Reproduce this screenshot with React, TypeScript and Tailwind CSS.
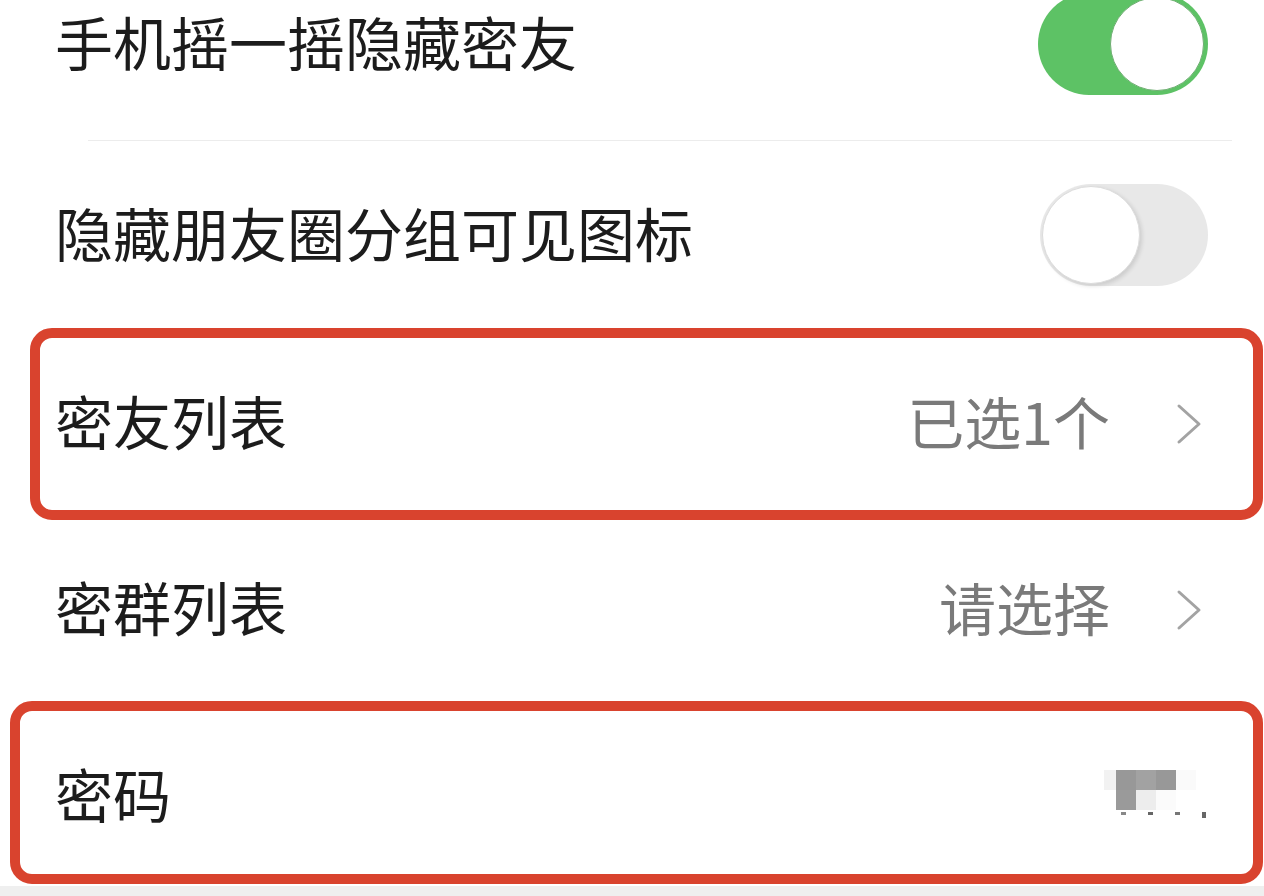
import React from "react";

const font = { fontFamily: '"Noto Sans CJK SC", "Noto Sans", sans-serif' };

function Toggle({ on }: { on: boolean }) {
  if (on) {
    return (
      <div className="flex h-[102px] w-[170px] shrink-0 items-center justify-end rounded-full bg-[#5dc265] pr-[4px]">
        <div className="h-[94px] w-[94px] rounded-full border border-[#6fae72] bg-white" />
      </div>
    );
  }
  return (
    <div className="flex h-[102px] w-[168px] shrink-0 items-center justify-start rounded-full bg-[#e8e8e8] pl-[2px]">
      <div className="h-[98px] w-[98px] rounded-full border border-[#dcdcdc] bg-white shadow-[2px_2px_4px_rgba(0,0,0,0.12)]" />
    </div>
  );
}

function Chevron() {
  return (
    <svg width="26" height="42" viewBox="0 0 26 42" fill="none" className="shrink-0">
      <polyline points="3,3 23,21 3,39" stroke="#a3a3a3" strokeWidth="3" strokeLinecap="round" strokeLinejoin="round" />
    </svg>
  );
}

function Mosaic() {
  return (
    <div className="flex flex-col">
      <div className="flex">
        <div className="h-[20px] w-[12px] bg-[#f2f2f2]" />
        <div className="h-[20px] w-[20px] bg-[#989898]" />
        <div className="h-[20px] w-[20px] bg-[#a2a2a2]" />
        <div className="h-[20px] w-[20px] bg-[#989898]" />
        <div className="h-[20px] w-[20px] bg-[#fafafa]" />
      </div>
      <div className="flex">
        <div className="h-[20px] w-[12px] bg-white" />
        <div className="h-[20px] w-[20px] bg-[#9a9a9a]" />
        <div className="h-[20px] w-[20px] bg-[#ededed]" />
        <div className="h-[20px] w-[20px] bg-[#fbfbfb]" />
      </div>
      <div className="mt-[2px] flex gap-[22px] pl-[17px]">
        <div className="h-[3px] w-[5px] bg-[#888]" />
        <div className="h-[3px] w-[5px] bg-[#666]" />
        <div className="h-[3px] w-[5px] bg-[#777]" />
        <div className="h-[6px] w-[4px] bg-[#666]" />
      </div>
    </div>
  );
}

export default function App() {
  return (
    <div className="h-[896px] w-full overflow-hidden bg-white" style={font}>
      <div className="-mt-[46px] flex flex-col">
        <div className="flex h-[186px] items-center justify-between pl-[55px] pr-[56px]">
          <span className="mb-[12px] text-[58px] leading-none text-[#1c1c1c]">手机摇一摇隐藏密友</span>
          <div className="-mt-[6px]">
            <Toggle on />
          </div>
        </div>
        <div className="ml-[88px] mr-[32px] h-px bg-[#ececec]" />
        <div className="flex h-[187px] items-center justify-between pl-[55px] pr-[56px]">
          <span className="mb-[6px] text-[58px] leading-none text-[#1c1c1c]">隐藏朋友圈分组可见图标</span>
          <Toggle on={false} />
        </div>
        <div className="relative flex h-[192px] items-center justify-between pl-[55px] pr-[62px]">
          <div className="absolute inset-y-0 left-[30px] right-px rounded-[22px] border-[10px] border-[#d9432e]" />
          <span className="mb-[8px] text-[58px] leading-none text-[#1c1c1c]">密友列表</span>
          <div className="flex items-center gap-[66px]">
            <span className="mb-[8px] text-[57px] leading-none text-[#7a7a7a]">已选1个</span>
            <Chevron />
          </div>
        </div>
        <div className="flex h-[180px] items-center justify-between pl-[55px] pr-[62px]">
          <span className="mb-[8px] text-[58px] leading-none text-[#1c1c1c]">密群列表</span>
          <div className="flex items-center gap-[66px]">
            <span className="mb-[8px] text-[57px] leading-none text-[#7a7a7a]">请选择</span>
            <Chevron />
          </div>
        </div>
        <div className="relative flex h-[186px] items-center justify-between pl-[55px] pr-[58px]">
          <div className="absolute bottom-[2px] left-[10px] right-px top-px rounded-[22px] border-[10px] border-[#d9432e]" />
          <span className="text-[58px] leading-none text-[#1c1c1c]">密码</span>
          <div className="mt-[2px]">
            <Mosaic />
          </div>
        </div>
      </div>
      <div className="h-[20px] bg-[#efefef]" />
    </div>
  );
}
